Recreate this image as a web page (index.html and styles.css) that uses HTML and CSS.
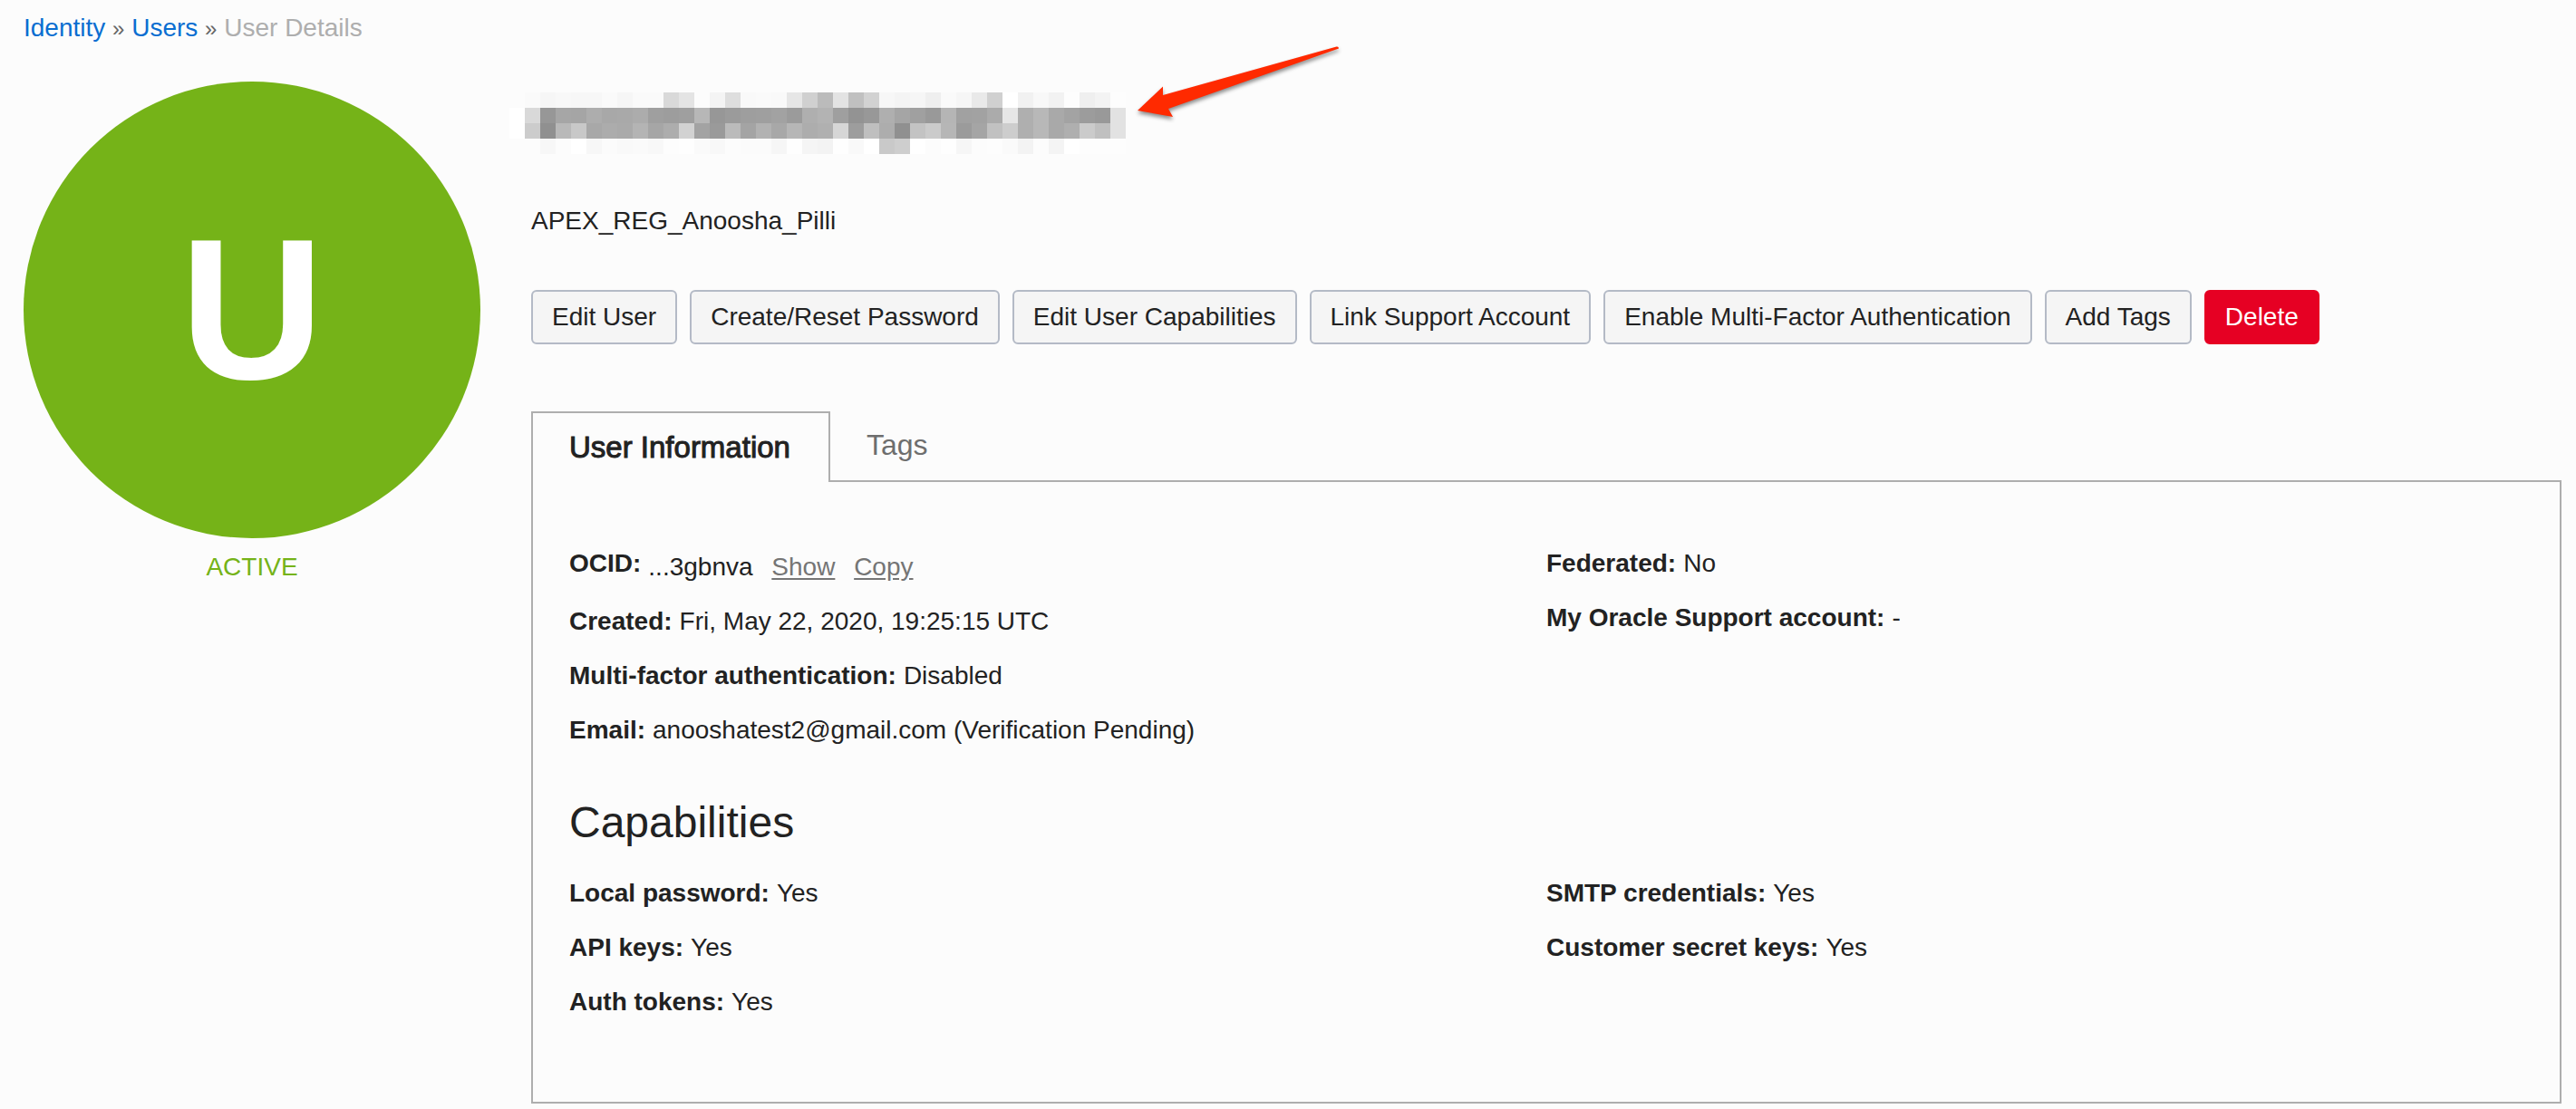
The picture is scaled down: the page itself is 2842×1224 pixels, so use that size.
FILE: index.html
```html
<!DOCTYPE html>
<html lang="en">
<head>
<meta charset="utf-8">
<meta name="viewport" content="width=device-width, initial-scale=1">
<title>User Details</title>
<link rel="stylesheet" href="styles.css">
</head>
<body>
<nav class="breadcrumb" aria-label="Breadcrumb">
  <a href="#identity">Identity</a> <span class="separator">»</span> <a href="#users">Users</a> <span class="separator">»</span> <span class="current">User Details</span>
</nav>
<main class="layout">
  <aside class="status">
    <div class="avatar">U</div>
    <p class="state">ACTIVE</p>
  </aside>
  <section class="details">
    <h1 class="username" aria-label="Hidden user name">
      <svg class="mosaic" id="mosaic" width="680" height="68" viewBox="0 0 680 68" shape-rendering="crispEdges" aria-hidden="true"></svg>
      <svg class="arrow" width="240" height="100" viewBox="0 0 240 100" aria-hidden="true">
        <path fill="#ff2a00" d="M5 82 33 55.500V65L224.500 11.500Q227 11 227 13.500L39 80 44 89Z"/>
      </svg>
    </h1>
    <p class="description">APEX_REG_Anoosha_Pilli</p>
    <div class="actions">
      <button type="button" class="button">Edit User</button>
      <button type="button" class="button">Create/Reset Password</button>
      <button type="button" class="button">Edit User Capabilities</button>
      <button type="button" class="button">Link Support Account</button>
      <button type="button" class="button">Enable Multi-Factor Authentication</button>
      <button type="button" class="button">Add Tags</button>
      <button type="button" class="button danger">Delete</button>
    </div>
    <div class="tabs" role="tablist">
      <button type="button" class="tab selected" role="tab" aria-selected="true">User Information</button>
      <button type="button" class="tab" role="tab" aria-selected="false">Tags</button>
    </div>
    <div class="panel" role="tabpanel">
      <div class="columns">
        <dl class="fields">
          <div class="field ocid"><dt>OCID:</dt> <dd>...3gbnva <a href="#show">Show</a> <a href="#copy">Copy</a></dd></div>
          <div class="field"><dt>Created:</dt> <dd>Fri, May 22, 2020, 19:25:15 UTC</dd></div>
          <div class="field"><dt>Multi-factor authentication:</dt> <dd>Disabled</dd></div>
          <div class="field"><dt>Email:</dt> <dd>anooshatest2@gmail.com (Verification Pending)</dd></div>
        </dl>
        <dl class="fields">
          <div class="field"><dt>Federated:</dt> <dd>No</dd></div>
          <div class="field"><dt>My Oracle Support account:</dt> <dd>-</dd></div>
        </dl>
      </div>
      <h2 class="subheading">Capabilities</h2>
      <div class="columns">
        <dl class="fields">
          <div class="field"><dt>Local password:</dt> <dd>Yes</dd></div>
          <div class="field"><dt>API keys:</dt> <dd>Yes</dd></div>
          <div class="field"><dt>Auth tokens:</dt> <dd>Yes</dd></div>
        </dl>
        <dl class="fields">
          <div class="field"><dt>SMTP credentials:</dt> <dd>Yes</dd></div>
          <div class="field"><dt>Customer secret keys:</dt> <dd>Yes</dd></div>
        </dl>
      </div>
    </div>
  </section>
</main>
<script src="mosaic.js"></script>
</body>
</html>
```
FILE: styles.css
```css
* {
  box-sizing: border-box;
}

body {
  margin: 0;
  padding: 11px 16px 6px 26px;
  background: #fcfcfc;
  color: #222;
  font: 28px/40px "Liberation Sans", Arial, sans-serif;
}

h1, h2, p, dl, dd {
  margin: 0;
}

.breadcrumb {
  margin-bottom: 39px;
}

.breadcrumb a {
  color: #0a6ed1;
  text-decoration: none;
}

.separator {
  color: #666;
  font-size: 24px;
  line-height: 1;
}

.current {
  color: #aeaeae;
}

.layout {
  display: grid;
  grid-template-columns: 504px minmax(0, 1fr);
  gap: 56px;
}

.avatar {
  display: flex;
  align-items: center;
  justify-content: center;
  aspect-ratio: 1;
  border-radius: 50%;
  background: #75b318;
  color: #fff;
  font-size: 220px;
  font-weight: bold;
  line-height: 1;
}

.state {
  margin-top: 12px;
  color: #75b318;
  text-align: center;
}

.username {
  position: relative;
  padding-top: 12px;
}

.mosaic {
  display: block;
  margin-left: -24px;
}

.arrow {
  position: absolute;
  top: -50px;
  left: 664px;
  filter: drop-shadow(0 3px 2px rgba(0, 0, 0, 0.45));
}

.description {
  margin: 54px 0 56px;
}

.actions {
  display: flex;
  flex-wrap: wrap;
  gap: 14px;
  margin-bottom: 74px;
}

.button {
  height: 60px;
  padding: 0 21px;
  border: 2px solid #b4bac6;
  border-radius: 6px;
  background: #f5f5f5;
  color: #222;
  font: inherit;
}

.danger {
  border-color: #e60023;
  background: #e60023;
  color: #fff;
}

.tabs {
  display: flex;
  position: relative;
  margin-bottom: -2px;
}

.tab {
  height: 78px;
  padding: 0 42px 4px 40px;
  border: 0;
  background: none;
  color: #6e6e6e;
  font: 32px/40px "Liberation Sans", Arial, sans-serif;
}

.selected {
  padding-bottom: 0;
  border: 2px solid #aeaeae;
  border-bottom: 0;
  background: #fcfcfc;
  color: #222;
  font-size: 33px;
  -webkit-text-stroke: 1px #222;
}

.panel {
  padding: 70px 40px 90px;
  border: 2px solid #aeaeae;
}

.columns {
  display: grid;
  grid-template-columns: 1fr 1fr;
}

.fields {
  display: flex;
  flex-direction: column;
  gap: 20px;
}

.field {
  display: flex;
  gap: 8px;
}

dt {
  font-weight: bold;
}

.ocid dd {
  margin-top: 4px;
}

.ocid a {
  margin-left: 13px;
  color: #757575;
  text-underline-offset: 3px;
}

.subheading {
  margin: 52px 0 28px;
  font-size: 48px;
  font-weight: normal;
  line-height: 60px;
}
```
FILE: mosaic.js
```js
// Grey levels of the pixelated user name, one pair of hex digits per 17px cell.
const rows = [
  "fcfaf6f8f7f7faf6fafad9e4fcf4def9faf9e6d0bbe3c0d2f7f4f6effaf6e9d0fff1f8f2fdeff3fd",
  "ffd997a6a5ada8a9ac9f9d9fb7979b9e9fa29bafb39f9398afa5a099b5a1a2abe6afb8a9a39c99e2",
  "ffcc90b9c8a8acaab4a6add2a39abba4b2a8b6adb0d69dbfad90c3cbb69ba5c1cdafb8a9afcbc0e2",
  "fcfcf7fcfff7fbf9faf8fdfefaf8fcfbfbf6fef5f3fef9ffc9cefffcfef6fcfdfaf3fcf4fffdfdfd"
];
const size = 17;
document.getElementById("mosaic").innerHTML = rows.map((row, y) =>
  row.match(/../g).map((level, x) =>
    `<rect x="${x * size}" y="${y * size}" width="${size}" height="${size}" fill="#${level.repeat(3)}"/>`
  ).join("")
).join("");
```
